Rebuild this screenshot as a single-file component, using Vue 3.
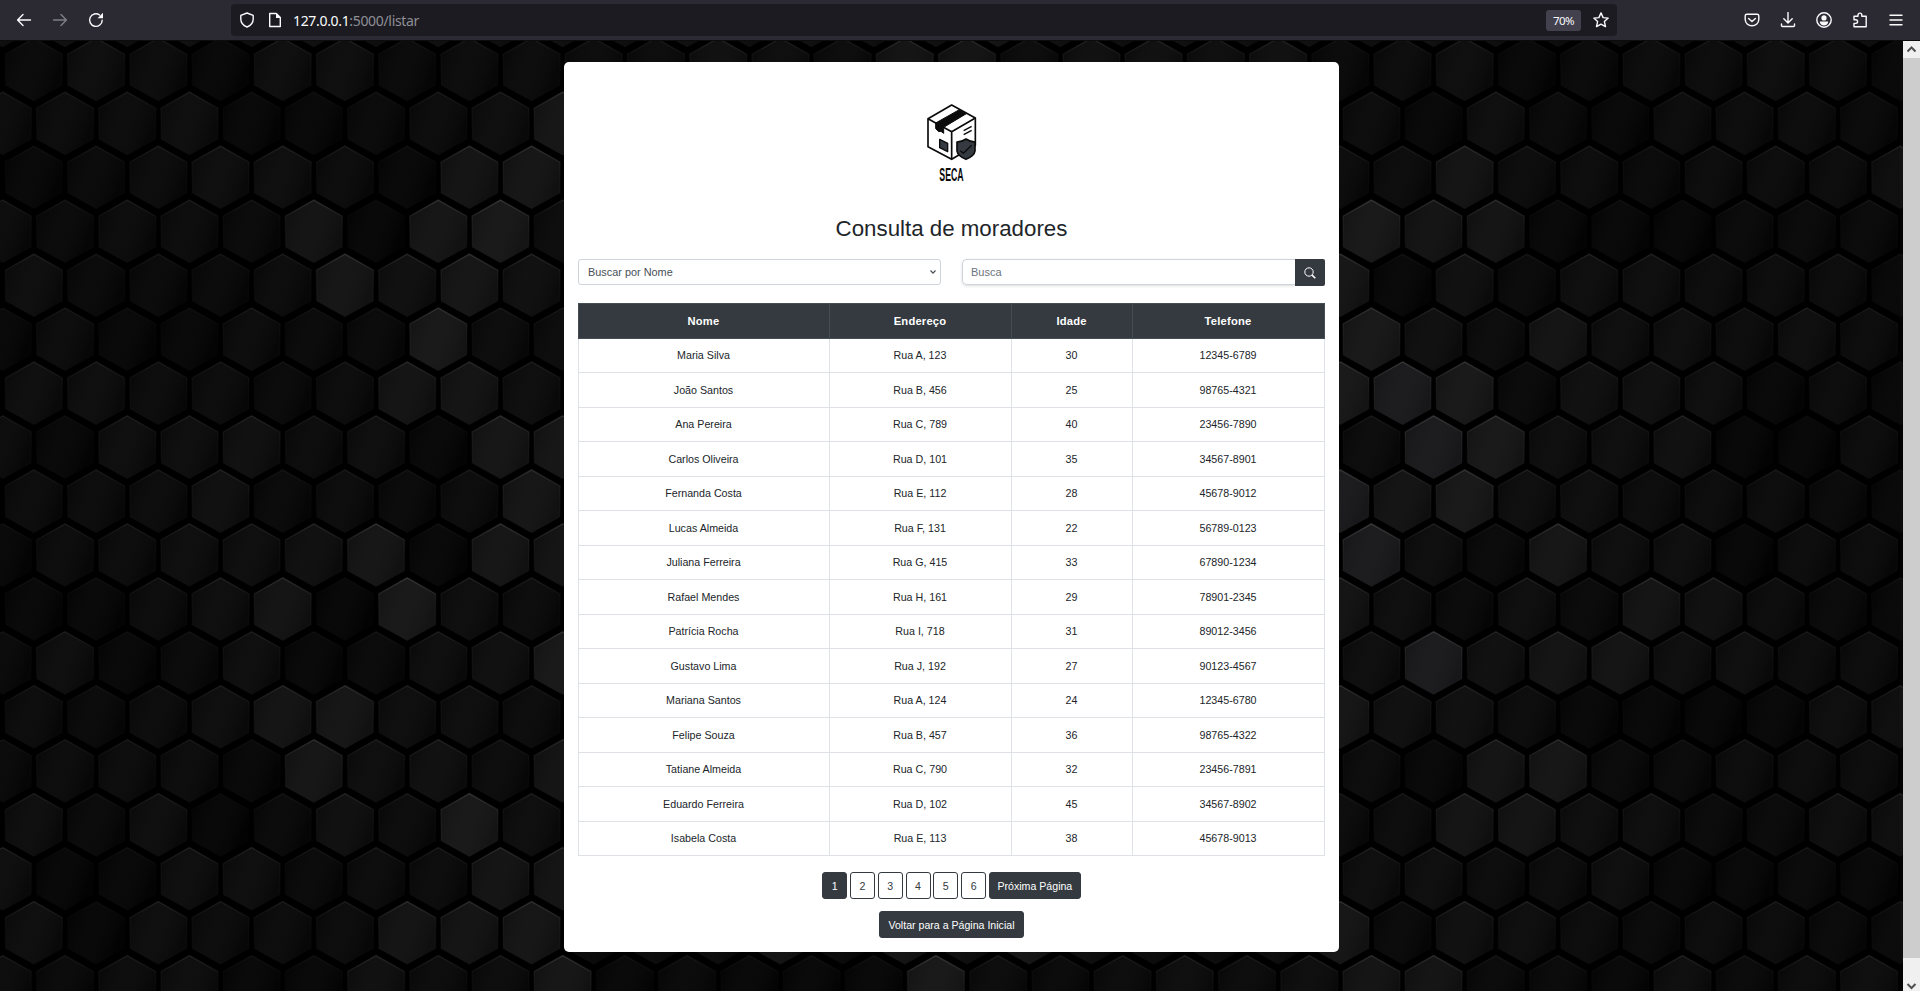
<script setup>
const levels = ['#010101', '#020202', '#040404', '#060606', '#080808', '#0a0a0b', '#0e0e0e', '#101011', '#131314', '#161618']
// Shade of every honeycomb cell, one string per row: left side, covered middle, right side
const rowShades = [
  '2431442333354366355452341233431',
  '3334112347333333333333314213332',
  '1234431673333333333333363323334',
  '3233260783333333333333866110222',
  '4222375753333333333337152443331',
  '1311322833333333333333853644343',
  '4433236643333333333338982554131',
  '3144534177333333333333398445003',
  '3335232373333333333339684433321',
  '1334457176333333333333942744033',
  '1134608433333333333336424265321',
  '2412412458333333333333495664433',
  '3234674433333333333337553110144',
  '2333174536333333333333316722333',
  '4240253843333333333333366442244',
  '4014423366333333333333443341121',
  '4043336672336264743337254323322',
  '3234115337121118323434662214234',
]
const STEP_X = 62.21
const STEP_Y = 53.96
const cells = []
for (let r = -1; r < rowShades.length; r++) {
  const odd = Math.abs(r) % 2 === 1
  const shades = r < 0 ? '4545454545454545654545454343434' : rowShades[r]
  for (let i = 0; i < shades.length; i++) {
    const level = Number(shades[i])
    cells.push({
      key: `${r}:${i}`,
      move: `translate(${((odd ? 2.8 : 33.9) + STEP_X * i).toFixed(2)} ${(28.7 + STEP_Y * r).toFixed(2)})`,
      fill: levels[level],
      edge: 0.12 + level * 0.08,
    })
  }
}

const residents = [
  ['Maria Silva', 'Rua A, 123', 30, '12345-6789'],
  ['João Santos', 'Rua B, 456', 25, '98765-4321'],
  ['Ana Pereira', 'Rua C, 789', 40, '23456-7890'],
  ['Carlos Oliveira', 'Rua D, 101', 35, '34567-8901'],
  ['Fernanda Costa', 'Rua E, 112', 28, '45678-9012'],
  ['Lucas Almeida', 'Rua F, 131', 22, '56789-0123'],
  ['Juliana Ferreira', 'Rua G, 415', 33, '67890-1234'],
  ['Rafael Mendes', 'Rua H, 161', 29, '78901-2345'],
  ['Patrícia Rocha', 'Rua I, 718', 31, '89012-3456'],
  ['Gustavo Lima', 'Rua J, 192', 27, '90123-4567'],
  ['Mariana Santos', 'Rua A, 124', 24, '12345-6780'],
  ['Felipe Souza', 'Rua B, 457', 36, '98765-4322'],
  ['Tatiane Almeida', 'Rua C, 790', 32, '23456-7891'],
  ['Eduardo Ferreira', 'Rua D, 102', 45, '34567-8902'],
  ['Isabela Costa', 'Rua E, 113', 38, '45678-9013'],
]
const pages = [1, 2, 3, 4, 5, 6]
</script>

<template>
  <div class="window">
    <header class="toolbar">
      <nav class="nav">
        <svg class="ico" viewBox="0 0 16 16"><path d="M14.500 8H1.800M7 2.600 1.600 8 7 13.400" /></svg>
        <svg class="ico dim" viewBox="0 0 16 16"><path d="M1.500 8h12.700M9 2.600 14.400 8 9 13.400" /></svg>
        <svg class="ico" viewBox="0 0 16 16"><path d="M14.200 8.200A6.300 6.300 0 1 1 11.600 3" /><path class="solid" d="M15 .8v5.400H9.600z" /></svg>
      </nav>
      <div class="urlbar">
        <svg class="ico" viewBox="0 0 16 16"><path d="M8 1 14.200 3.400V7c0 3.600-2.600 6.600-6.200 8C4.400 13.600 1.800 10.600 1.800 7V3.400z" /></svg>
        <svg class="ico page-ico" viewBox="0 0 16 16"><path d="M3.300 1.500h6l4 4v9H2.700V1.500z" /><path class="solid" d="M9 1.200v4.800h4.700z" /></svg>
        <span class="url"><b>127.0.0.1</b>:5000/listar</span>
        <span class="zoom">70%</span>
        <svg class="ico star" viewBox="0 0 16 16"><path d="m8 .9 2.100 4.700 5.100.5-3.800 3.500 1.100 5L8 12.100l-4.500 2.500 1.100-5L.8 6.100l5.100-.5z" /></svg>
      </div>
      <div class="tools">
        <svg class="ico" viewBox="0 0 16 16"><path d="M2.800 2.200h10.400q1.600 0 1.600 1.600V7.500a6.800 6.300 0 0 1-13.600 0V3.800q0-1.600 1.600-1.600zM4.600 6.400 8 9.500l3.400-3.100" /></svg>
        <svg class="ico" viewBox="0 0 16 16"><path d="M8 .5v10M3.800 6.700 8 10.900l4.200-4.200M1.500 12v1.500q0 1 1 1h11q1 0 1-1V12" /></svg>
        <svg class="ico" viewBox="0 0 16 16"><circle cx="8" cy="8" r="7.200" /><circle class="solid" cx="8" cy="5.900" r="2.600" /><path class="solid" d="M3.800 9.500h8.400c0 2.500-2 3.900-4.200 3.900s-4.200-1.400-4.200-3.900z" /></svg>
        <svg class="ico" viewBox="0 0 16 16"><path d="M2 14.800V11.400h1.800a1.800 1.800 0 0 0 0-3.600H2V4.200h4V3a1.900 1.900 0 0 1 3.800 0v1.200h4.400v10.600z" /></svg>
        <svg class="ico" viewBox="0 0 16 16"><path d="M2 3.300h12M2 8h12M2 12.700h12" /></svg>
      </div>
    </header>

    <div class="viewport">
      <svg class="honeycomb" viewBox="0 0 1903 950" width="1903" height="950" aria-hidden="true">
        <defs>
          <linearGradient id="edge" x1="0" y1="0" x2="0" y2="1">
            <stop offset="0" stop-color="#fff" stop-opacity=".2" />
            <stop offset=".35" stop-color="#fff" stop-opacity=".07" />
            <stop offset="1" stop-color="#fff" stop-opacity="0" />
          </linearGradient>
          <linearGradient id="sheen" x1="0" y1="0" x2="1" y2=".4">
            <stop offset="0" stop-color="#000" stop-opacity=".12" />
            <stop offset="1" stop-color="#fff" stop-opacity=".006" />
          </linearGradient>
          <path id="hex" d="M0-31.500 28.400-15.500V15.500L0 31.500-28.400 15.500V-15.500z" />
        </defs>
        <g v-for="c in cells" :key="c.key" :transform="c.move">
          <use href="#hex" :fill="c.fill" />
          <use href="#hex" fill="url(#sheen)" stroke="url(#edge)" stroke-width="1.400" :stroke-opacity="c.edge" />
        </g>
      </svg>

      <main class="card">
        <svg class="logo" viewBox="0 0 330 300" width="110" height="100" role="img" aria-label="SECA">
          <g fill="#fff" stroke="#0b0b0c" stroke-width="5" stroke-linejoin="round">
            <path d="M84 86 155 45 226 84V166L155 208 84 170z" />
            <path d="M84 86 155 125 226 84M155 125V208" fill="none" />
            <path d="m107 99 71-40 21 12-68 41v18l-8-6-7 1-9-9z" fill="#0b0b0c" stroke-width="3" />
            <path d="m119 148 24 12v25l-24-12z" fill="#343a40" stroke-width="4" />
            <path d="m191 122 24-13M191 134l24-13" stroke-width="4" fill="none" />
            <path d="M198 147q13 9 27 9v27q-2 15-27 25-25-10-27-25v-27q15 0 27-9z" fill="#343a40" />
            <path d="m181 182 9 8 25-24" fill="none" stroke-width="4" />
          </g>
          <text x="118" y="273" textLength="73" lengthAdjust="spacingAndGlyphs">SECA</text>
        </svg>
        <h1>Consulta de moradores</h1>

        <div class="filters">
          <div class="select">
            <span>Buscar por Nome</span>
            <svg viewBox="0 0 8 6" width="8" height="6"><path d="m1.500 1.500 2.500 2.700 2.500-2.700" /></svg>
          </div>
          <div class="search">
            <div class="field">Busca</div>
            <div class="go">
              <svg viewBox="0 0 12 12" width="12" height="12"><circle cx="5" cy="5" r="4.200" /><path d="m8.100 8.100 3.200 3.100" stroke-width="1.600" /></svg>
            </div>
          </div>
        </div>

        <table>
          <colgroup><col class="c1" /><col class="c2" /><col class="c3" /><col class="c4" /></colgroup>
          <thead>
            <tr><th>Nome</th><th>Endereço</th><th>Idade</th><th>Telefone</th></tr>
          </thead>
          <tbody>
            <tr v-for="r in residents" :key="r[0]"><td v-for="v in r" :key="v">{{ v }}</td></tr>
          </tbody>
        </table>

        <div class="pager">
          <span v-for="p in pages" :key="p" class="btn num" :class="{ active: p === 1 }">{{ p }}</span>
          <span class="btn active next">Próxima Página</span>
        </div>
        <div class="btn active back">Voltar para a Página Inicial</div>
      </main>

      <aside class="scrollbar">
        <svg viewBox="0 0 17 17" width="17" height="17"><path d="m4.500 10.500 4-4 4 4" /></svg>
        <div class="thumb"></div>
        <svg class="down" viewBox="0 0 17 17" width="17" height="17"><path d="m4.500 7 4 4 4-4" /></svg>
      </aside>
    </div>
  </div>
</template>

<style>
body { margin: 0; overflow: hidden; background: #000; }
</style>

<style scoped>
.window { width: 1920px; height: 991px; display: flex; flex-direction: column; overflow: hidden; font-family: "Liberation Sans", Arial, sans-serif; }
.toolbar { height: 41px; box-sizing: border-box; flex: none; display: flex; align-items: center; background: #2b2a33; border-bottom: 1px solid #0c0c0d; }
.ico { width: 16px; height: 16px; flex: none; fill: none; stroke: #fbfbfe; stroke-width: 1.400; stroke-linecap: round; stroke-linejoin: round; }
.ico .solid { fill: #fbfbfe; stroke: none; }
.dim { opacity: .4; }
.nav { width: 231px; box-sizing: border-box; padding-left: 16px; display: flex; gap: 20px; }
.urlbar { width: 1386px; height: 32px; box-sizing: border-box; padding: 0 8px; display: flex; align-items: center; background: #1c1b22; border-radius: 4px; }
.page-ico { margin-left: 12px; }
.url { margin: 2px 0 0 10px; flex: 1; font: 14px/20px "Noto Sans", sans-serif; letter-spacing: -.33px; color: #8f8f96; }
.url b { font-weight: 400; color: #fbfbfe; }
.zoom { width: 35px; height: 21px; border-radius: 3px; background: #42414d; color: #fbfbfe; font: 11.500px/22px "Noto Sans", sans-serif; letter-spacing: -.5px; text-align: center; }
.star { margin-left: 12px; }
.tools { margin-left: 127px; display: flex; gap: 20px; }
.viewport { flex: 1; min-height: 0; position: relative; display: flex; justify-content: space-between; background: #000; }
.honeycomb { position: absolute; left: 0; top: 0; }
.card { position: relative; width: 775px; height: 890px; margin: 21px 0 0 564px; box-sizing: border-box; padding: 28px 14px 14px; background: #fff; border-radius: 5px; display: flex; flex-direction: column; align-items: center; color: #212529; font-size: 11px; }
.logo { margin-left: 7px; flex: none; }
.logo text { font: 700 57px "Liberation Sans", Arial, sans-serif; fill: #0b0b0c; }
h1 { margin: 25px 0 0; font-size: 22.300px; line-height: 27px; font-weight: 400; white-space: nowrap; }
.filters { width: 747px; margin-top: 17px; display: flex; justify-content: space-between; }
.select { width: 363px; height: 26px; box-sizing: border-box; border: 1px solid #ced4da; border-radius: 3px; padding: 0 3px 0 9px; display: flex; align-items: center; justify-content: space-between; color: #495057; font-size: 10.900px; }
.select svg { fill: none; stroke: #495057; stroke-width: 1.200; }
.search { width: 363px; height: 27px; display: flex; }
.field { flex: 1; height: 26px; box-sizing: border-box; border: 1px solid #ced4da; border-right: 0; border-radius: 5px 0 0 5px; padding-left: 8px; line-height: 25px; color: #6c757d; box-shadow: 0 1px 3px rgba(0, 0, 0, .15); }
.go { position: relative; width: 30px; height: 27px; background: #343a40; border-radius: 0 2px 2px 0; display: flex; align-items: center; justify-content: center; }
.go svg { fill: none; stroke: #fff; stroke-width: 1; }
table { width: 746px; margin: 17px 1px 0 0; border-collapse: collapse; table-layout: fixed; text-align: center; }
.c1 { width: 251px; } .c2 { width: 182px; } .c3 { width: 121px; } .c4 { width: 192px; }
th, td { padding: 0; border: 1px solid #dee2e6; font-size: 10.700px; }
td { height: 33.500px; }
th { height: 33.500px; background: #343a40; color: #fff; border-color: #454d55; font-size: 11.200px; letter-spacing: .2px; }
.pager { margin-top: 16px; display: flex; gap: 2.800px; }
.btn { box-sizing: border-box; height: 27px; border: 1px solid #343a40; border-radius: 3px; line-height: 26px; text-align: center; color: #343a40; background: #fff; white-space: nowrap; font-size: 10.600px; }
.num { width: 25px; }
.btn.active { background: #343a40; color: #fff; }
.next { width: 92px; }
.back { width: 145px; margin-top: 12px; }
.scrollbar { position: relative; width: 17px; display: flex; flex-direction: column; background: #f0f0f0; overflow: hidden; }
.scrollbar svg { flex: none; fill: none; stroke: #505050; stroke-width: 2; }
.thumb { flex: none; height: 900px; background: #cdcdcd; }
.scrollbar .down { margin-top: 19px; }
</style>
